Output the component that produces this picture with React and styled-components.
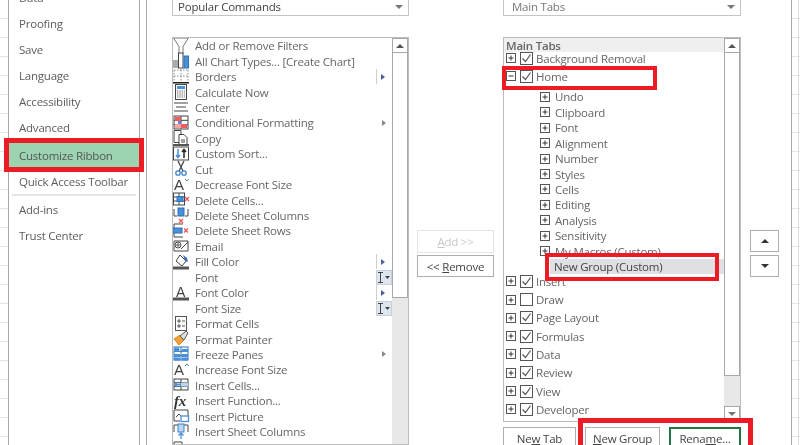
import React from 'react';
import styled, { createGlobalStyle, css } from 'styled-components';

const GlobalStyle = createGlobalStyle`
  html, body { margin: 0; padding: 0; background: #fff; }
  body {
    font-family: "Open Sans", "Liberation Sans", sans-serif;
    letter-spacing: -0.22px;
  }
`;

const Page = styled.div`
  position: relative;
  display: flex;
  width: 800px;
  height: 445px;
  overflow: hidden;
  background: #fff;
  filter: blur(0.35px);
`;

const SheetEdge = styled.div`
  width: 8px;
  flex: none;
  background: repeating-linear-gradient(180deg, #fff 0 18px, #e4e4e4 18px 19px);
  ${p => p.$column && css`
    background:
      linear-gradient(90deg, transparent 6px, #dcdcdc 6px, #dcdcdc 7px, transparent 7px),
      repeating-linear-gradient(180deg, #fff 0 18px, #e4e4e4 18px 19px);
  `}
`;

const Sidebar = styled.nav`
  width: 132px;
  height: 461px;
  flex: none;
  box-sizing: border-box;
  margin: -16px 6px 0 0;
  border-left: 1px solid #a8a8a8;
  border-right: 1px solid #a8a8a8;
  display: flex;
  flex-direction: column;
`;

const NavItem = styled.div`
  height: 26px;
  flex: none;
  display: flex;
  align-items: center;
  padding-left: 10px;
  font-size: 11.5px;
  color: #5c5c5c;
  ${p => p.$active && css`
    height: 27px;
    margin: 2px 0 -1px;
    background: #9cd4b1;
    color: #555;
  `}
`;

const NavSeparator = styled.div`
  height: 2px;
  flex: none;
  margin: 0 3px;
  background: #e6e6e6;
`;

const Dialog = styled.main`
  width: 646px;
  flex: none;
  box-sizing: border-box;
  border-left: 1px solid #a8a8a8;
  border-right: 1px solid #a8a8a8;
  padding-left: 25px;
  display: flex;
`;

const Column = styled.section`
  width: ${p => p.$width}px;
  margin-right: ${p => p.$gap}px;
  flex: none;
  display: flex;
  flex-direction: column;
`;

const Combo = styled.div`
  height: 16px;
  flex: none;
  box-sizing: border-box;
  border: 1px solid #c4c4c4;
  border-top: 0;
  margin-bottom: 21px;
  display: flex;
  align-items: center;
  justify-content: space-between;
  padding: 0 5px 2px ${p => p.$indent}px;
  font-size: 11.5px;
  color: ${p => p.$color};
`;

const Caret = styled.span`
  width: 0;
  height: 0;
  border-left: 4px solid transparent;
  border-right: 4px solid transparent;
  border-top: 4px solid #777;
  ${p => p.$up && css`
    border-top: 0;
    border-bottom: 4px solid #555;
  `}
`;

const ListBox = styled.div`
  box-sizing: border-box;
  flex: ${p => (p.$height ? 'none' : '1')};
  height: ${p => (p.$height ? `${p.$height}px` : 'auto')};
  min-height: 0;
  border: 1px solid #bcbcbc;
  display: flex;
  overflow: hidden;
`;

const ListBody = styled.div`
  flex: 1;
  min-width: 0;
  overflow: hidden;
`;

const Scrollbar = styled.div`
  width: 16px;
  flex: none;
  background: #e8e8e8;
  display: flex;
  flex-direction: column;
`;

const ScrollButton = styled.div`
  height: 15px;
  flex: none;
  box-sizing: border-box;
  background: #fff;
  border: 1px solid #a8a8a8;
  display: flex;
  align-items: center;
  justify-content: center;
`;

const ScrollThumb = styled.div`
  height: ${p => p.$height}px;
  flex: none;
  box-sizing: border-box;
  background: #fff;
  border: 1px solid #a8a8a8;
  border-top: 0;
`;

const ScrollTrack = styled.div`
  flex: 1;
`;

const CommandRow = styled.div`
  height: 15.45px;
  display: flex;
  align-items: center;
  font-size: 11.5px;
  color: #666;
  white-space: nowrap;
`;

const CommandIcon = styled.svg`
  width: 16px;
  height: 16px;
  flex: none;
  margin-right: 6px;
  overflow: visible;
`;

const CommandLabel = styled.span`
  flex: 1;
`;

const Trailing = styled.span`
  width: 16px;
  height: 15px;
  flex: none;
  display: flex;
  align-items: center;
  justify-content: flex-start;
  gap: 4px;
  box-sizing: border-box;
  ${p => p.$combo && css`
    background: #dee6f0;
    border: 1px solid #c6cfdb;
    justify-content: center;
    gap: 0;
  `}
`;

const SplitBar = styled.span`
  width: 1px;
  height: 15px;
  background: #cfcfcf;
`;

const SubmenuArrow = styled.span`
  width: 0;
  height: 0;
  margin-left: ${p => (p.$plain ? 6 : 0)}px;
  border-top: 3.5px solid transparent;
  border-bottom: 3.5px solid transparent;
  border-left: 4px solid ${p => (p.$plain ? '#888' : '#4a5f9c')};
`;

const TreeHeader = styled.div`
  height: 14px;
  margin-bottom: -3px;
  padding-left: 2px;
  background: #efefef;
  font-size: 11.5px;
  font-weight: 600;
  color: #666;
  display: flex;
  align-items: center;
`;

const TreeRow = styled.div`
  position: relative;
  height: 18.3px;
  display: flex;
  align-items: center;
  padding-left: 2px;
  font-size: 11.5px;
  color: #666;
  white-space: nowrap;
`;

const TreeChildren = styled.div`
  margin: 3.5px 0 -2.2px;
`;

const TreeChild = styled.div`
  height: 15.45px;
  display: flex;
  align-items: center;
  padding-left: 36px;
  font-size: 11.5px;
  color: #666;
  white-space: nowrap;
  ${p => p.$selected && css`
    margin-left: 46px;
    padding-left: 4px;
    background: #dfdfe4;
    color: #444;
  `}
`;

const ExpanderBox = styled.svg`
  width: 10px;
  height: 10px;
  flex: none;
  margin-right: ${p => p.$gap}px;
`;

const CheckBox = styled.svg`
  width: 13px;
  height: 13px;
  flex: none;
  margin-right: 3px;
`;

const ButtonRow = styled.div`
  display: grid;
  grid-template-columns: 73px 75px 72px;
  gap: 9px;
  margin-top: 5px;
`;

const DialogButton = styled.div`
  height: ${p => p.$height || 22}px;
  flex: none;
  box-sizing: border-box;
  display: flex;
  align-items: center;
  justify-content: center;
  font-size: 11.5px;
  color: ${p => (p.$disabled ? '#c8c8c8' : '#444')};
  border: 1px solid ${p => (p.$disabled ? '#e4e4e4' : '#adadad')};
  ${p => p.$default && css`
    border: 2px solid #217346;
  `}
  u { text-underline-offset: 1px; }
`;

const MiddleStack = styled.div`
  display: flex;
  flex-direction: column;
  gap: 2px;
  margin-top: 230px;
`;

const MoveStack = styled.div`
  display: flex;
  flex-direction: column;
  gap: 3px;
  margin-top: 230px;
`;

const MoveButton = styled.div`
  height: 22px;
  box-sizing: border-box;
  border: 1px solid #adadad;
  display: flex;
  align-items: center;
  justify-content: center;
`;

const MoveArrow = styled.span`
  width: 0;
  height: 0;
  border-left: 4px solid transparent;
  border-right: 4px solid transparent;
  ${p => (p.$up ? css`border-bottom: 4px solid #333;` : css`border-top: 4px solid #333;`)}
`;

// red boxes drawn over the screenshot
const Callout = styled.div`
  position: absolute;
  left: ${p => p.$left}px;
  top: ${p => p.$top}px;
  width: ${p => p.$width}px;
  height: ${p => p.$height}px;
  box-sizing: border-box;
  border: ${p => p.$border}px solid #ed1c24;
`;

const BLUE = '#4a90d9';
const RED = '#ee5a5f';
const DARK = '#444';
const GREY = '#777';

const Grid = ({ x = 1, y = 2, w = 14, h = 11, color = DARK }) => (
  <g fill="none" stroke={color}>
    <rect x={x} y={y} width={w} height={h} />
    <path d={`M${x} ${y + h / 3}h${w}M${x} ${y + (2 * h) / 3}h${w}M${x + w / 2} ${y}v${h}`} />
  </g>
);

const Cross = ({ x, y }) => (
  <path d={`M${x} ${y}l4 4m0-4l-4 4`} stroke={RED} strokeWidth="1.4" fill="none" />
);

const Letter = ({ size = 15, y = 13, x = 1 }) => (
  <text x={x} y={y} fontFamily="Liberation Sans" fontSize={size} fill={DARK}>A</text>
);

const icons = {
  filter: <path d="M0.500 0H15.500L10 8.500V16H6V8.500Z" fill="#fff" stroke={GREY} />,
  chart: <g><rect x="0" y="7" width="5" height="8" fill="#aaa" /><rect x="5.500" y="0" width="4.500" height="15" fill="#fff" stroke={DARK} /><rect x="11" y="3" width="4.500" height="12" fill={BLUE} stroke="#2a70b9" /></g>,
  borders: <g><path d="M1 1h14M8 1v12M1 7h14M1 1v12M15 1v12" stroke="#888" strokeDasharray="1.5 1.5" fill="none" /><rect x="0" y="13" width="16" height="1.5" fill="#222" /></g>,
  calc: <g><rect x="2.5" y="0.5" width="11" height="15" fill="#fff" stroke={DARK} /><rect x="4" y="2" width="8" height="3" fill={BLUE} /><path d="M4 7h8M4 9h8M4 11h8M4 13h8" stroke="#777" strokeDasharray="1.5 .8" /></g>,
  center: <path d="M1 4h14M3 8h10M1 12h14" stroke={DARK} fill="none" />,
  conditional: <g><Grid x={1} y={1} w={14} h={13} /><rect x="2" y="2" width="6" height="4" fill={RED} /><rect x="5" y="6" width="3" height="3" fill={BLUE} /><rect x="8" y="9" width="6" height="4" fill={RED} /><rect x="2" y="9" width="6" height="4" fill="#f5a5a8" /></g>,
  copy: <g fill="#fff" stroke={DARK}><path d="M1 0.5h7v12H1z" /><path d="M6 4.5h5l3 3v8H6z" /><path d="M8 10h4M8 12h4" /></g>,
  sort: <g><rect x="0" y="-2" width="16" height="2" fill="#555" /><rect x="0.5" y="1" width="15" height="13" fill="#fff" stroke={DARK} /><path d="M5 3v8M3 9l2 2.500 2-2.500" stroke={BLUE} strokeWidth="1.5" fill="none" /><path d="M11 12V4M9 6l2-2.500 2 2.500" stroke="#222" strokeWidth="1.5" fill="none" /></g>,
  cut: <g fill="none"><path d="M5 0l5 10M11 0L6 10" stroke={DARK} strokeWidth="1.3" /><circle cx="5" cy="12" r="2.200" stroke="#3f83c8" strokeWidth="1.300" /><circle cx="11" cy="12" r="2.200" stroke="#3f83c8" strokeWidth="1.300" /></g>,
  fontDown: <g><Letter /><path d="M12 2l2 2 2-2" stroke={BLUE} fill="none" /></g>,
  fontUp: <g><Letter /><path d="M12 4l2-2 2 2" stroke={BLUE} fill="none" /></g>,
  delCells: <g><Grid x={0.5} y={1} w={11} h={12} /><rect x="4" y="4.500" width="6" height="5" fill={BLUE} stroke="#2a70b9" /><Cross x={12} y={5} /></g>,
  delCols: <g><path d="M1 8V1M15 8V1M1 8h3M12 8h3" stroke={DARK} fill="none" /><rect x="5" y="0" width="6" height="8" fill={BLUE} stroke="#2a70b9" /><Cross x={6} y={11} /></g>,
  delRows: <g><path d="M1 1h9M1 14h9M1 1v13" stroke={DARK} fill="none" /><rect x="0" y="5" width="9" height="5" fill={BLUE} stroke="#2a70b9" /><Cross x={11} y={5.500} /></g>,
  email: <g fill="none" stroke={DARK}><path d="M1 3h14v10H1z" /><path d="M8 11l7-7" /><circle cx="5" cy="7" r="3" /><circle cx="5" cy="7" r="1.200" /></g>,
  fill: <g><path d="M7 1l6 6-4 5-6-5z" fill="#fff" stroke={DARK} /><path d="M10 1l4 3 1 4-3-1z" fill="#3f6fb5" /><rect x="0" y="12.500" width="16" height="3" fill="#555" /></g>,
  fontColor: <g><Letter size={14} y={11.500} x={3} /><rect x="0" y="12.500" width="16" height="3" fill="#555" /></g>,
  formatCells: <g fill="none" stroke="#555"><rect x="2.500" y="0.500" width="11" height="14" /><path d="M5 4h2v2H5zM9 5h3M5 9h2v2H5zM9 10h3" /></g>,
  painter: <g><path d="M1 8l5 6 5-5-4-5z" fill="#f0a13a" stroke="#d8831a" /><path d="M7 5l4 4 4-7-2-2z" fill="#ddd" stroke="#555" /></g>,
  freeze: <g><Grid x={1} y={1} w={14} h={13} color="#2a70b9" /><rect x="1" y="8" width="6" height="3" fill={BLUE} /><rect x="1" y="11.500" width="6" height="3" fill={BLUE} /><rect x="9" y="8" width="6" height="3" fill={BLUE} /><rect x="9" y="11.500" width="6" height="3" fill={BLUE} /><rect x="9" y="3" width="6" height="3" fill={BLUE} /><path d="M4 1v5M1.500 3.500h5M2 2l4 3M6 2L2 5" stroke="#2a80d0" /></g>,
  insCells: <g><Grid x={1} y={2} w={14} h={11} /><rect x="8" y="5.500" width="7" height="4" fill="#bcd6f0" /><path d="M8 7.500H2M4.500 5l-2.500 2.500L4.500 10" stroke={BLUE} strokeWidth="1.400" fill="none" /></g>,
  fx: <text x="1" y="13" fontFamily="Liberation Serif" fontStyle="italic" fontWeight="700" fontSize="15" fill="#333">fx</text>,
  picture: <g fill="none"><path d="M1 2h14v7M1 2v11h6" stroke={DARK} /><path d="M3 9l3-3 2 2" stroke={DARK} /><rect x="8" y="8" width="7.500" height="5.500" fill="#fff" stroke={BLUE} strokeWidth="1.300" /></g>,
  insCols: <g><path d="M1 8V1h14v7" stroke={DARK} fill="none" /><rect x="5" y="0" width="6" height="8" fill="#bcd6f0" stroke="#3f83c8" /><path d="M8 15V9M5.500 11.500L8 9l2.500 2.500" stroke={BLUE} strokeWidth="1.300" fill="none" /></g>,
  insRows: <g><path d="M1 3h8v4H1z" fill="none" stroke={DARK} /><rect x="1" y="8" width="13" height="5" fill={BLUE} /></g>,
};

const commands = [
  ['Add or Remove Filters', 'filter'],
  ['All Chart Types... [Create Chart]', 'chart'],
  ['Borders', 'borders', 'split'],
  ['Calculate Now', 'calc'],
  ['Center', 'center'],
  ['Conditional Formatting', 'conditional', 'arrow'],
  ['Copy', 'copy'],
  ['Custom Sort...', 'sort'],
  ['Cut', 'cut'],
  ['Decrease Font Size', 'fontDown'],
  ['Delete Cells...', 'delCells'],
  ['Delete Sheet Columns', 'delCols'],
  ['Delete Sheet Rows', 'delRows'],
  ['Email', 'email'],
  ['Fill Color', 'fill', 'split'],
  ['Font', null, 'combo'],
  ['Font Color', 'fontColor', 'split'],
  ['Font Size', null, 'combo'],
  ['Format Cells', 'formatCells'],
  ['Format Painter', 'painter'],
  ['Freeze Panes', 'freeze', 'arrow'],
  ['Increase Font Size', 'fontUp'],
  ['Insert Cells...', 'insCells'],
  ['Insert Function...', 'fx'],
  ['Insert Picture', 'picture'],
  ['Insert Sheet Columns', 'insCols'],
  ['Insert Sheet Rows', 'insRows'],
];

const homeGroups = ['Undo', 'Clipboard', 'Font', 'Alignment', 'Number', 'Styles', 'Cells', 'Editing', 'Analysis', 'Sensitivity', 'My Macros (Custom)'];
const tabsAfterHome = [['Insert', true], ['Draw', false], ['Page Layout', true], ['Formulas', true], ['Data', true], ['Review', true], ['View', true], ['Developer', true]];

const Expander = ({ open, gap = 4 }) => (
  <ExpanderBox $gap={gap} viewBox="0 0 10 10">
    <rect x="0.5" y="0.5" width="9" height="9" fill="#fff" stroke="#555" />
    <path d={open ? 'M2.500 5h5' : 'M2.500 5h5M5 2.500v5'} stroke="#333" />
  </ExpanderBox>
);

const Check = ({ on = true }) => (
  <CheckBox viewBox="0 0 13 13">
    <rect x="0.5" y="0.5" width="12" height="12" fill="#fff" stroke="#555" />
    {on && <path d="M2.500 6.500l3 3 5-7" stroke="#555" strokeWidth="1.200" fill="none" />}
  </CheckBox>
);

const IBeam = () => (
  <svg width="14" height="11" viewBox="0 0 14 11">
    <path d="M1 0.500h5M3.500 0.500v10M1 10.500h5" stroke="#444" fill="none" />
    <path d="M8 4h5l-2.500 3z" fill="#444" />
  </svg>
);

const TrailingPart = ({ kind }) => {
  if (kind === 'split') return <Trailing><SplitBar /><SubmenuArrow /></Trailing>;
  if (kind === 'arrow') return <Trailing><SubmenuArrow $plain /></Trailing>;
  if (kind === 'combo') return <Trailing $combo><IBeam /></Trailing>;
  return null;
};

export default function App() {
  return (
    <>
      <GlobalStyle />
      <Page>
        <SheetEdge />
        <Sidebar>
          <NavItem>Data</NavItem>
          <NavItem>Proofing</NavItem>
          <NavItem>Save</NavItem>
          <NavItem>Language</NavItem>
          <NavItem>Accessibility</NavItem>
          <NavItem>Advanced</NavItem>
          <NavItem $active>Customize Ribbon</NavItem>
          <NavItem>Quick Access Toolbar</NavItem>
          <NavSeparator />
          <NavItem>Add-ins</NavItem>
          <NavItem>Trust Center</NavItem>
        </Sidebar>
        <Dialog>
          <Column $width={237} $gap={8}>
            <Combo $indent={5} $color="#444">Popular Commands<Caret /></Combo>
            <ListBox>
              <ListBody>
                {commands.map(([label, icon, trailing]) => (
                  <CommandRow key={label}>
                    <CommandIcon viewBox="0 0 16 16">{icons[icon]}</CommandIcon>
                    <CommandLabel>{label}</CommandLabel>
                    <TrailingPart kind={trailing} />
                  </CommandRow>
                ))}
              </ListBody>
              <Scrollbar>
                <ScrollButton><Caret $up /></ScrollButton>
                <ScrollThumb $height={245} />
                <ScrollTrack />
              </Scrollbar>
            </ListBox>
          </Column>
          <Column $width={77} $gap={9}>
            <MiddleStack>
              <DialogButton $disabled $height={23}><span><u>A</u>dd &gt;&gt;</span></DialogButton>
              <DialogButton><span>&lt;&lt; <u>R</u>emove</span></DialogButton>
            </MiddleStack>
          </Column>
          <Column $width={238} $gap={9}>
            <Combo $indent={8} $color="#777">Main Tabs<Caret /></Combo>
            <ListBox $height={385}>
              <ListBody>
                <TreeHeader>Main Tabs</TreeHeader>
                <TreeRow><Expander /><Check />Background Removal</TreeRow>
                <TreeRow><Expander open /><Check />Home</TreeRow>
                <TreeChildren>
                  {homeGroups.map(name => (
                    <TreeChild key={name}><Expander gap={5} />{name}</TreeChild>
                  ))}
                  <TreeChild $selected>New Group (Custom)</TreeChild>
                </TreeChildren>
                {tabsAfterHome.map(([name, on]) => (
                  <TreeRow key={name}><Expander /><Check on={on} />{name}</TreeRow>
                ))}
              </ListBody>
              <Scrollbar>
                <ScrollButton><Caret $up /></ScrollButton>
                <ScrollThumb $height={323} />
                <ScrollTrack />
                <ScrollButton><Caret /></ScrollButton>
              </Scrollbar>
            </ListBox>
            <ButtonRow>
              <DialogButton><span>Ne<u>w</u> Tab</span></DialogButton>
              <DialogButton><span><u>N</u>ew Group</span></DialogButton>
              <DialogButton $default><span>Rena<u>m</u>e...</span></DialogButton>
            </ButtonRow>
          </Column>
          <Column $width={29} $gap={0}>
            <MoveStack>
              <MoveButton><MoveArrow $up /></MoveButton>
              <MoveButton><MoveArrow /></MoveButton>
            </MoveStack>
          </Column>
        </Dialog>
        <SheetEdge $column />
        <Callout $left={4} $top={138} $width={140} $height={34} $border={5} />
        <Callout $left={502} $top={66} $width={155} $height={24} $border={4} />
        <Callout $left={545} $top={253} $width={174} $height={28} $border={4} />
        <Callout $left={578} $top={418} $width={175} $height={40} $border={5} />
      </Page>
    </>
  );
}
